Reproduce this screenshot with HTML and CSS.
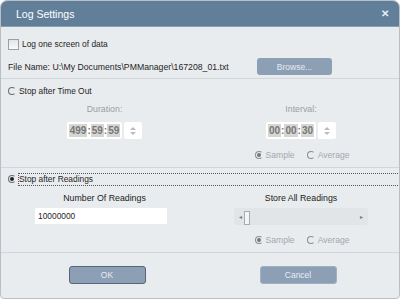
FILE: index.html
```html
<!doctype html>
<html>
<head>
<meta charset="utf-8">
<title>Log Settings</title>
<link rel="stylesheet" href="styles.css">
</head>
<body>
<div class="dialog">
	<div class="titlebar">
		<span class="title">Log Settings</span>
		<span class="close">&#x2715;</span>
	</div>

	<div class="section sec-file">
		<div class="row chk-row"><span class="checkbox"></span>Log one screen of data</div>
		<div class="row file-row">
			<span class="file-name">File Name: U:\My Documents\PMManager\167208_01.txt</span>
			<span class="btn btn-browse">Browse...</span>
		</div>
	</div>

	<div class="section sec-time">
		<div class="row radio-row"><span class="radio"></span>Stop after Time Out</div>
		<div class="cols">
			<div class="col">
				<div class="lbl dim">Duration:</div>
				<div class="timer">
					<span class="tbox"><b>499</b>:<b>59</b>:<b>59</b></span>
					<span class="spin"><i class="up"></i><i class="down"></i></span>
				</div>
			</div>
			<div class="col">
				<div class="lbl dim">Interval:</div>
				<div class="timer">
					<span class="tbox"><b>00</b>:<b>00</b>:<b>30</b></span>
					<span class="spin"><i class="up"></i><i class="down"></i></span>
				</div>
				<div class="opts">
					<span class="opt"><span class="radio sm on"></span>Sample</span>
					<span class="opt"><span class="radio sm"></span>Average</span>
				</div>
			</div>
		</div>
	</div>

	<div class="section sec-read">
		<div class="row radio-row"><span class="radio on"></span><span class="focus">Stop after Readings</span></div>
		<div class="cols">
			<div class="col">
				<div class="lbl">Number Of Readings</div>
				<div class="input">10000000</div>
			</div>
			<div class="col">
				<div class="lbl">Store All Readings</div>
				<div class="slider">
					<span class="arr">&#9666;</span>
					<span class="thumb"></span>
					<span class="track"></span>
					<span class="arr">&#9656;</span>
				</div>
				<div class="opts">
					<span class="opt"><span class="radio sm on"></span>Sample</span>
					<span class="opt"><span class="radio sm"></span>Average</span>
				</div>
			</div>
		</div>
	</div>

	<div class="buttons">
		<span class="btn btn-ok">OK</span>
		<span class="btn btn-cancel">Cancel</span>
	</div>
</div>
</body>
</html>
```

FILE: styles.css
```css
html, body
{
	margin:0px;
	padding:0px;
	background:#ffffff;
}
body
{
	font-family:"Liberation Sans", Arial, sans-serif;
	font-size:8.4px;
	color:#1e1e1e;
}
.dialog
{
	width:398px;
	height:297px;
	border:1px #b9bfc5 solid;
	border-radius:7px 7px 4px 4px;
	background:#e9ecef;
	overflow:hidden;
	display:flex;
	flex-direction:column;
}
.titlebar
{
	height:25px;
	background:#627f9a;
	display:flex;
	align-items:center;
	justify-content:space-between;
	padding:0px 10px 0px 15px;
	border-bottom:1px #8aa0b4 solid;
}
.title
{
	color:#fff;
	font-size:10.5px;
}
.close
{
	color:#e8eef4;
	font-size:10px;
	font-weight:bold;
}
.section
{
	border-bottom:1px #d2d6da solid;
	padding:0px 0px 0px 7px;
}
.row
{
	display:flex;
	align-items:center;
	white-space:nowrap;
}
.sec-file
{
	height:52px;
	padding-top:11px;
	box-sizing:border-box;
}
.chk-row
{
	height:12px;
}
.checkbox
{
	width:9px;
	height:9px;
	border:1px #9aa0a6 solid;
	background:linear-gradient(#e2e4e6, #fafafa);
	margin-right:3px;
}
.file-row
{
	margin-top:8px;
	height:17px;
}
.file-name
{
	width:249px;
	font-size:8.7px;
}
.btn
{
	display:flex;
	align-items:center;
	justify-content:center;
	background:#8c9fb5;
	color:#e6ecf2;
	border-radius:3px;
	box-sizing:border-box;
	font-size:8.5px;
}
.btn-browse
{
	width:75px;
	height:17px;
}
.sec-time
{
	height:89px;
	box-sizing:border-box;
	padding-top:6px;
}
.radio-row
{
	height:12px;
}
.radio
{
	width:8px;
	height:8px;
	border-radius:50%;
	border:1px #6a6e72 solid;
	border-right-color:#e9ecef;
	margin-right:3px;
	box-sizing:border-box;
	position:relative;
}
.radio.on::after
{
	content:"";
	position:absolute;
	left:1px;
	top:1px;
	width:4px;
	height:4px;
	border-radius:50%;
	background:#222;
}
.radio.sm
{
	border-color:#8a8e92;
	border-right-color:#e9ecef;
}
.radio.sm.on::after
{
	background:#777;
}
.cols
{
	display:grid;
	grid-template-columns:193px 200px;
}
.col
{
	display:flex;
	flex-direction:column;
	align-items:center;
}
.lbl
{
	height:14px;
	line-height:14px;
	margin-top:5px;
	font-size:8.8px;
}
.dim
{
	color:#9a9ea2;
}
.timer
{
	display:flex;
	margin-top:6px;
	gap:2px;
}
.tbox
{
	display:flex;
	align-items:center;
	background:#fff;
	height:17px;
	padding:0px 2px;
	border-radius:2px;
	color:#777;
	font-weight:bold;
	font-size:10px;
}
.tbox b
{
	background:#d6d6d2;
	padding:0px 1px;
	height:13px;
	line-height:13px;
}
.spin
{
	width:18px;
	height:17px;
	background:#fff;
	border-radius:2px;
	display:flex;
	flex-direction:column;
	align-items:center;
	justify-content:center;
	gap:2px;
}
.up
{
	border-left:3px transparent solid;
	border-right:3px transparent solid;
	border-bottom:3px #b8bcc0 solid;
}
.down
{
	border-left:3px transparent solid;
	border-right:3px transparent solid;
	border-top:3px #b8bcc0 solid;
}
.opts
{
	display:flex;
	gap:12px;
	margin-top:11px;
	color:#a4a8ac;
	font-size:8.6px;
	margin-left:2px;
}
.opt
{
	display:flex;
	align-items:center;
}
.sec-read
{
	height:85px;
	box-sizing:border-box;
	padding-top:5px;
}
.focus
{
	outline:1px #555 dotted;
	flex:1;
	height:11px;
	line-height:11px;
}
.sec-read .lbl
{
	margin-top:6px;
	color:#222;
}
.input
{
	width:132px;
	height:16px;
	margin-top:3px;
	background:#fff;
	box-sizing:border-box;
	padding-left:3px;
	line-height:16px;
	align-self:flex-start;
	margin-left:27px;
}
.slider
{
	width:134px;
	height:17px;
	margin-top:3px;
	background:#e2e5e8;
	border-radius:3px;
	display:flex;
	align-items:center;
	padding:0px 5px;
	box-sizing:border-box;
	color:#777;
	font-size:6px;
}
.thumb
{
	width:4px;
	height:12px;
	border:1px #a8acb0 solid;
	background:#f4f4f4;
	margin-left:2px;
	margin-top:3px;
}
.track
{
	flex:1;
}
.sec-read .opts
{
	margin-top:10px;
}
.buttons
{
	display:grid;
	grid-template-columns:200px 200px;
	justify-items:center;
	padding-top:13px;
}
.btn-ok
{
	width:77px;
	height:18px;
	border:1px #56657a solid;
	margin-left:12px;
}
.btn-cancel
{
	width:77px;
	height:18px;
	border:1px #9fb0c2 solid;
	margin-left:-6px;
}
```
